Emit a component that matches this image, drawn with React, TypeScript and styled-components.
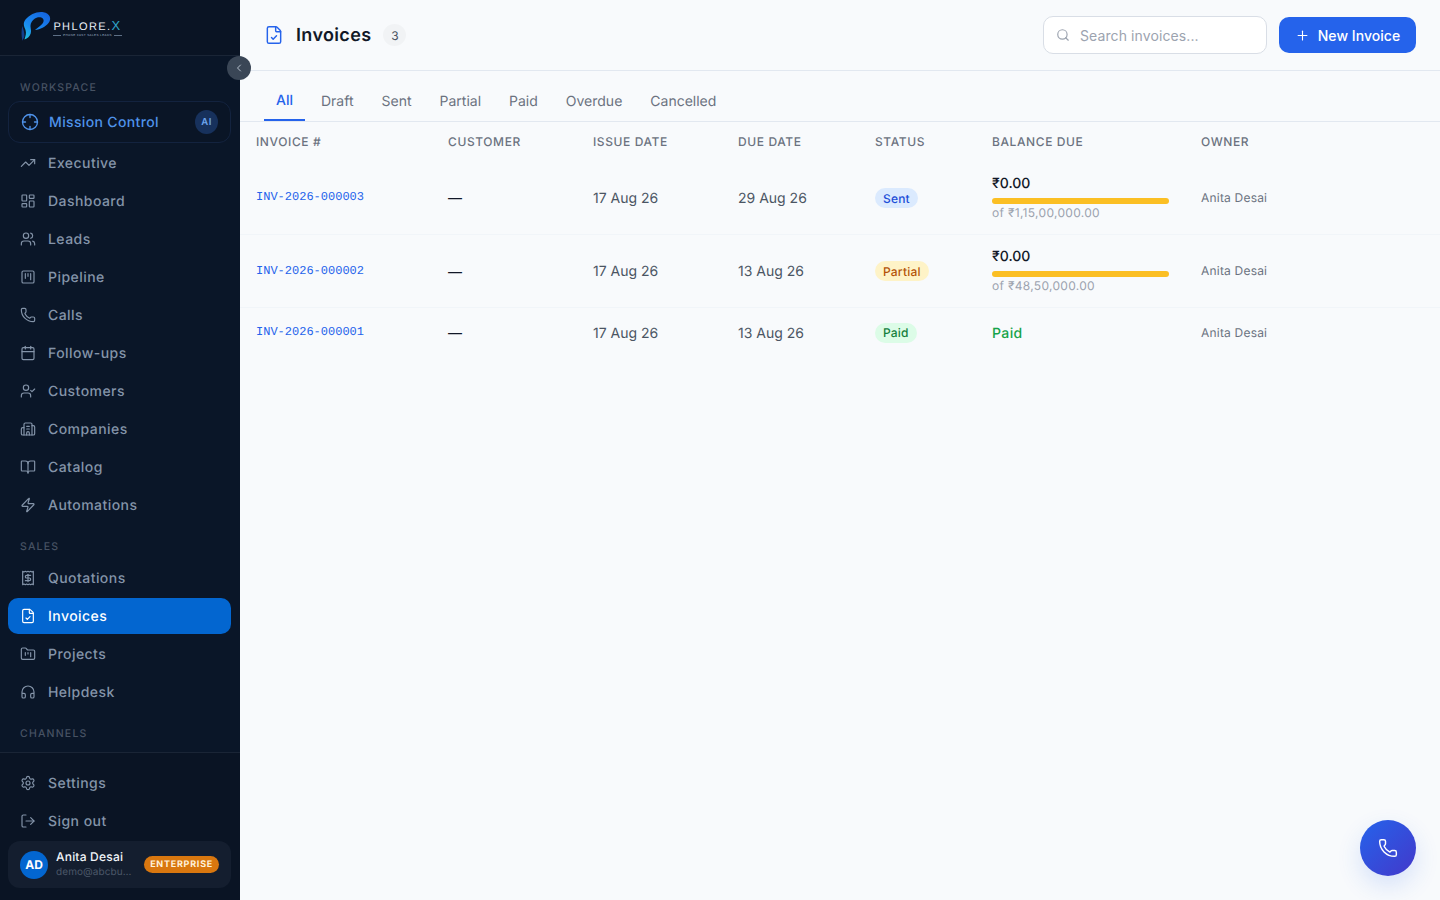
import React, { FC } from "react"
import styled, { createGlobalStyle } from "styled-components"
import {
  BookOpen,
  Building2,
  Calendar,
  ChevronLeft,
  Crosshair,
  FileCheck,
  FolderKanban,
  Headphones,
  LayoutDashboard,
  LogOut,
  LucideIcon,
  Phone,
  Plus,
  Receipt,
  Search,
  Settings,
  SquareKanban,
  TrendingUp,
  UserCheck,
  Users,
  Zap,
} from "lucide-react"

const GlobalStyle = createGlobalStyle`
  * {
    box-sizing: border-box;
  }
  html, body {
    margin: 0;
    height: 100%;
    background: #f8fafc;
    font-family: Inter, "Noto Sans", sans-serif;
    text-rendering: geometricPrecision;
  }
`

interface NavEntry {
  label: string
  icon: LucideIcon
  active?: boolean
}

const workspace: NavEntry[] = [
  { label: "Executive", icon: TrendingUp },
  { label: "Dashboard", icon: LayoutDashboard },
  { label: "Leads", icon: Users },
  { label: "Pipeline", icon: SquareKanban },
  { label: "Calls", icon: Phone },
  { label: "Follow-ups", icon: Calendar },
  { label: "Customers", icon: UserCheck },
  { label: "Companies", icon: Building2 },
  { label: "Catalog", icon: BookOpen },
  { label: "Automations", icon: Zap },
]

const sales: NavEntry[] = [
  { label: "Quotations", icon: Receipt },
  { label: "Invoices", icon: FileCheck, active: true },
  { label: "Projects", icon: FolderKanban },
  { label: "Helpdesk", icon: Headphones },
]

const tabs = ["All", "Draft", "Sent", "Partial", "Paid", "Overdue", "Cancelled"]

type Status = "Sent" | "Partial" | "Paid"

interface Invoice {
  number: string
  issued: string
  due: string
  status: Status
  total?: string
}

const invoices: Invoice[] = [
  { number: "INV-2026-000003", issued: "17 Aug 26", due: "29 Aug 26", status: "Sent", total: "₹1,15,00,000.00" },
  { number: "INV-2026-000002", issued: "17 Aug 26", due: "13 Aug 26", status: "Partial", total: "₹48,50,000.00" },
  { number: "INV-2026-000001", issued: "17 Aug 26", due: "13 Aug 26", status: "Paid" },
]

const statusColors: Record<Status, { bg: string; fg: string }> = {
  Sent: { bg: "#dbeafe", fg: "#1d4ed8" },
  Partial: { bg: "#fef3c7", fg: "#b45309" },
  Paid: { bg: "#dcfce7", fg: "#15803d" },
}

const Logo: FC = () => (
  <LogoWrap>
    <svg width="38" height="34" viewBox="0 0 36 32" fill="none">
      <defs>
        <linearGradient id="logo-p" x1="28" y1="0" x2="6" y2="30" gradientUnits="userSpaceOnUse">
          <stop offset="0" stopColor="#1463e0" />
          <stop offset="0.55" stopColor="#1a8cf0" />
          <stop offset="1" stopColor="#27d3d8" />
        </linearGradient>
      </defs>
      <path
        d="M9 8C13 3 20 0 26 1c6 1 8 6 5 10-3 4-8 6-13 7 3-3 7-5 8-8 1-3-2-5-6-4-3 1-5 3-6 6-1 3 1 6 0 9-1 3-3 5-6 6 1-3 2-6 1-9-1-3-3-6 0-10Z"
        fill="url(#logo-p)"
      />
      <path d="M6 14c-1 4-1 9 0 14 1-2 2-3 2-5 0-3-1-6-2-9Z" fill="#123f8c" />
    </svg>
    <LogoText>
      <LogoName>
        PHLORE.<LogoX>X</LogoX>
      </LogoName>
      <LogoTag>PHONE FAST SALES LEADS</LogoTag>
    </LogoText>
  </LogoWrap>
)

const NavRow: FC<{ entry: NavEntry }> = ({ entry }) => {
  const Icon = entry.icon
  return (
    <NavItem $active={entry.active}>
      <Icon size={16} strokeWidth={1.75} />
      {entry.label}
    </NavItem>
  )
}

const App: FC = () => {
  return (
    <>
      <GlobalStyle />
      <Shell>
        <Sidebar>
          <Brand>
            <Logo />
          </Brand>
          <Collapse>
            <ChevronLeft size={12} />
          </Collapse>
          <Nav>
            <SectionLabel>WORKSPACE</SectionLabel>
            <MissionItem>
              <Crosshair size={18} strokeWidth={1.75} />
              Mission Control
              <AiBadge>AI</AiBadge>
            </MissionItem>
            {workspace.map(entry => (
              <NavRow key={entry.label} entry={entry} />
            ))}
            <SectionLabel>SALES</SectionLabel>
            {sales.map(entry => (
              <NavRow key={entry.label} entry={entry} />
            ))}
            <SectionLabel>CHANNELS</SectionLabel>
          </Nav>
          <SideFooter>
            <NavRow entry={{ label: "Settings", icon: Settings }} />
            <NavRow entry={{ label: "Sign out", icon: LogOut }} />
            <UserCard>
              <Avatar>AD</Avatar>
              <UserInfo>
                <UserName>Anita Desai</UserName>
                <UserMail>demo@abcbuilders.in</UserMail>
              </UserInfo>
              <PlanBadge>ENTERPRISE</PlanBadge>
            </UserCard>
          </SideFooter>
        </Sidebar>

        <Main>
          <TopBar>
            <TitleGroup>
              <FileCheck size={20} color="#2563eb" strokeWidth={1.75} />
              <Title>Invoices</Title>
              <CountBadge>3</CountBadge>
            </TitleGroup>
            <Actions>
              <SearchBox>
                <Search size={14} color="#9ca3af" />
                <SearchInput placeholder="Search invoices..." />
              </SearchBox>
              <PrimaryButton>
                <Plus size={15} strokeWidth={1.75} />
                New Invoice
              </PrimaryButton>
            </Actions>
          </TopBar>

          <Tabs>
            {tabs.map(tab => (
              <Tab key={tab} $active={tab === "All"}>
                {tab}
              </Tab>
            ))}
          </Tabs>

          <Table>
            <colgroup>
              <col width={192} />
              <col width={145} />
              <col width={145} />
              <col width={137} />
              <col width={117} />
              <col width={209} />
              <col />
            </colgroup>
            <thead>
              <tr>
                <Th>Invoice #</Th>
                <Th>Customer</Th>
                <Th>Issue Date</Th>
                <Th>Due Date</Th>
                <Th>Status</Th>
                <Th>Balance Due</Th>
                <Th>Owner</Th>
              </tr>
            </thead>
            <tbody>
              {invoices.map(inv => (
                <Row key={inv.number} $tall={!!inv.total}>
                  <Td>
                    <InvoiceLink>{inv.number}</InvoiceLink>
                  </Td>
                  <Td>
                    <Customer>—</Customer>
                  </Td>
                  <DateCell>{inv.issued}</DateCell>
                  <DateCell>{inv.due}</DateCell>
                  <Td>
                    <StatusPill $status={inv.status}>{inv.status}</StatusPill>
                  </Td>
                  <Td>
                    {inv.total ? (
                      <>
                        <Amount>₹0.00</Amount>
                        <Bar />
                        <OfTotal>of {inv.total}</OfTotal>
                      </>
                    ) : (
                      <PaidText>Paid</PaidText>
                    )}
                  </Td>
                  <OwnerCell>Anita Desai</OwnerCell>
                </Row>
              ))}
            </tbody>
          </Table>
        </Main>

        <CallButton>
          <Phone size={20} strokeWidth={1.75} />
        </CallButton>
      </Shell>
    </>
  )
}

const Shell = styled.div`
  display: flex;
  height: 900px;
  overflow: hidden;
`

const Sidebar = styled.aside`
  position: relative;
  flex: 0 0 240px;
  display: flex;
  flex-direction: column;
  background: #0a1628;
`

const Brand = styled.div`
  height: 56px;
  flex: none;
  display: flex;
  align-items: center;
  padding-left: 16px;
  background: #0a1424;
  border-bottom: 1px solid #1a2536;
`

const LogoWrap = styled.div`
  display: flex;
  align-items: center;
`

const LogoText = styled.div`
  display: flex;
  flex-direction: column;
  align-items: center;
  margin-left: -1px;
  margin-top: 2px;
`

const LogoName = styled.div`
  font-family: "Liberation Sans", sans-serif;
  font-size: 11px;
  line-height: 12px;
  letter-spacing: 1.4px;
  color: #e8eef6;
`

const LogoX = styled.span`
  color: #2fa6c9;
  font-size: 13px;
`

const LogoTag = styled.div`
  display: flex;
  align-items: center;
  gap: 2px;
  font-family: "Liberation Sans", sans-serif;
  font-size: 3px;
  line-height: 5px;
  letter-spacing: 0.4px;
  color: #9fb0c4;
  white-space: nowrap;

  &::before,
  &::after {
    content: "";
    width: 8px;
    height: 1px;
    background: #5d6f85;
  }
`

const Collapse = styled.button`
  position: absolute;
  top: 56px;
  left: 227px;
  z-index: 5;
  width: 24px;
  height: 24px;
  padding: 0;
  display: flex;
  align-items: center;
  justify-content: center;
  border: none;
  border-radius: 50%;
  background: #3a4656;
  color: #b6c0cc;
`

const Nav = styled.nav`
  flex: 1;
  min-height: 0;
  overflow: hidden;
  padding: 8px 9px 0 8px;
`

const SectionLabel = styled.div`
  height: 16px;
  margin: 15px 0 6px;
  padding-left: 12px;
  font-size: 10.5px;
  font-weight: 500;
  line-height: 17px;
  letter-spacing: 1.2px;
  color: #475263;
`

const NavItem = styled.div<{ $active?: boolean }>`
  display: flex;
  align-items: center;
  gap: 12px;
  height: 36px;
  margin-bottom: 2px;
  padding-left: 12px;
  border-radius: 10px;
  font-size: 14px;
  font-weight: 450;
  letter-spacing: 0.45px;
  color: ${p => (p.$active ? "#ffffff" : "#8494a9")};
  background: ${p => (p.$active ? "#0366d0" : "transparent")};

  svg {
    flex: none;
    color: ${p => (p.$active ? "#ffffff" : "#8494a9")};
  }
`

const MissionItem = styled.div`
  display: flex;
  align-items: center;
  gap: 10px;
  height: 42px;
  margin-bottom: 2px;
  padding: 0 12px 0 12px;
  border: 1px solid #13233f;
  border-radius: 12px;
  background: #0a1526;
  font-size: 14px;
  font-weight: 500;
  letter-spacing: 0.35px;
  color: #4f93ea;
`

const AiBadge = styled.span`
  margin-left: auto;
  width: 23px;
  height: 24px;
  display: flex;
  align-items: center;
  justify-content: center;
  border-radius: 50%;
  background: #17315c;
  color: #6ea5ee;
  font-size: 9.5px;
  font-weight: 600;
  letter-spacing: 0.5px;
`

const SideFooter = styled.div`
  flex: none;
  padding: 12px 9px 12px 8px;
  background: #0a1424;
  border-top: 1px solid #1a2536;
`

const UserCard = styled.div`
  display: flex;
  align-items: center;
  height: 47px;
  padding: 0 12px;
  border-radius: 12px;
  background: #141e2f;
`

const Avatar = styled.div`
  flex: none;
  width: 28px;
  height: 28px;
  display: flex;
  align-items: center;
  justify-content: center;
  border-radius: 50%;
  background: #0366d0;
  color: #ffffff;
  font-size: 12px;
  font-weight: 700;
`

const UserInfo = styled.div`
  flex: none;
  width: 78px;
  margin-left: 8px;
  margin-top: -2px;
`

const UserName = styled.div`
  font-size: 12px;
  font-weight: 500;
  line-height: 16px;
  letter-spacing: 0.2px;
  color: #f1f5f9;
`

const UserMail = styled.div`
  overflow: hidden;
  white-space: nowrap;
  text-overflow: ellipsis;
  font-size: 10px;
  line-height: 14px;
  letter-spacing: 0.1px;
  color: #4b5768;
`

const PlanBadge = styled.span`
  margin-left: auto;
  padding: 0 6px;
  height: 17px;
  display: flex;
  align-items: center;
  border-radius: 9px;
  background: #d9770f;
  color: #fff1dc;
  font-size: 9px;
  font-weight: 700;
  letter-spacing: 0.75px;
`

const Main = styled.main`
  flex: 1;
  min-width: 0;
  background: #f8fafc;
`

const TopBar = styled.header`
  height: 71px;
  display: flex;
  align-items: center;
  justify-content: space-between;
  padding: 0 24px;
  border-bottom: 1px solid #e2e8f0;
`

const TitleGroup = styled.div`
  display: flex;
  align-items: center;
`

const Title = styled.h1`
  margin: 0 12px;
  font-size: 18px;
  font-weight: 600;
  letter-spacing: 0.35px;
  color: #111827;
`

const CountBadge = styled.span`
  width: 23px;
  height: 22px;
  display: flex;
  align-items: center;
  justify-content: center;
  border-radius: 50%;
  background: #f1f3f5;
  color: #4b5563;
  font-size: 12px;
`

const Actions = styled.div`
  display: flex;
  align-items: center;
  gap: 12px;
`

const SearchBox = styled.label`
  width: 224px;
  height: 38px;
  display: flex;
  align-items: center;
  gap: 10px;
  padding-left: 12px;
  border: 1px solid #d9dee6;
  border-radius: 10px;
  background: #ffffff;
`

const SearchInput = styled.input`
  flex: 1;
  min-width: 0;
  padding: 0;
  border: none;
  outline: none;
  background: transparent;
  font-family: inherit;
  font-size: 14px;
  letter-spacing: 0.1px;

  &::placeholder {
    color: #9ca3af;
    opacity: 1;
  }
`

const PrimaryButton = styled.button`
  width: 137px;
  height: 36px;
  padding: 0;
  display: flex;
  align-items: center;
  justify-content: center;
  gap: 8px;
  border: none;
  border-radius: 10px;
  background: #2563eb;
  color: #ffffff;
  font-family: inherit;
  font-size: 14px;
  font-weight: 450;
  letter-spacing: 0.05px;
`

const Tabs = styled.nav`
  height: 51px;
  display: flex;
  align-items: flex-end;
  gap: 4px;
  padding-left: 24px;
  border-bottom: 1px solid #e2e8f0;
`

const Tab = styled.div<{ $active?: boolean }>`
  height: 35px;
  padding: 0 12px ${p => (p.$active ? "3px" : "1px")};
  display: flex;
  align-items: center;
  border-bottom: 2px solid ${p => (p.$active ? "#2563eb" : "transparent")};
  font-size: 14px;
  line-height: 20px;
  color: ${p => (p.$active ? "#2563eb" : "#6b7280")};
  font-weight: ${p => (p.$active ? 500 : 400)};
`

const Table = styled.table`
  width: 100%;
  table-layout: fixed;
  border-collapse: collapse;
`

const Th = styled.th`
  height: 39px;
  padding: 0 16px;
  text-align: left;
  text-transform: uppercase;
  font-size: 12px;
  font-weight: 450;
  letter-spacing: 0.6px;
  color: #6b7280;
`

const Row = styled.tr<{ $tall: boolean }>`
  height: ${p => (p.$tall ? "73px" : "50px")};
  border-bottom: 1px solid ${p => (p.$tall ? "#f1f5f9" : "transparent")};
`

const Td = styled.td`
  padding: 0 16px;
  vertical-align: middle;
`

const InvoiceLink = styled.a`
  display: block;
  font-family: "Liberation Mono", monospace;
  font-size: 12px;
  line-height: 16px;
  color: #2563eb;
`

const Customer = styled.span`
  font-size: 14px;
  color: #111827;
`

const DateCell = styled(Td)`
  padding-top: 2px;
  font-size: 14px;
  color: #4b5563;
`

const StatusPill = styled.span<{ $status: Status }>`
  display: inline-flex;
  align-items: center;
  height: 20px;
  padding: 0 8px;
  border-radius: 10px;
  font-size: 12px;
  font-weight: 450;
  letter-spacing: 0.2px;
  background: ${p => statusColors[p.$status].bg};
  color: ${p => statusColors[p.$status].fg};
`

const Amount = styled.div`
  font-size: 14px;
  font-weight: 500;
  line-height: 22px;
  color: #111827;
`

const Bar = styled.div`
  height: 6px;
  margin-top: 3px;
  border-radius: 3px;
  background: #fbbf24;
`

const OfTotal = styled.div`
  font-size: 12px;
  line-height: 18px;
  letter-spacing: 0.3px;
  color: #9ca3af;
`

const PaidText = styled.span`
  font-size: 14px;
  font-weight: 450;
  letter-spacing: 0.4px;
  color: #16a34a;
`

const OwnerCell = styled(Td)`
  font-size: 12px;
  letter-spacing: 0.2px;
  color: #6b7280;
`

const CallButton = styled.button`
  position: fixed;
  right: 24px;
  bottom: 24px;
  width: 56px;
  height: 56px;
  padding: 0;
  display: flex;
  align-items: center;
  justify-content: center;
  border: none;
  border-radius: 50%;
  background: linear-gradient(135deg, #2563eb, #4338ca);
  color: #ffffff;
  box-shadow: 0 10px 24px rgba(37, 99, 235, 0.16);
`

export default App
